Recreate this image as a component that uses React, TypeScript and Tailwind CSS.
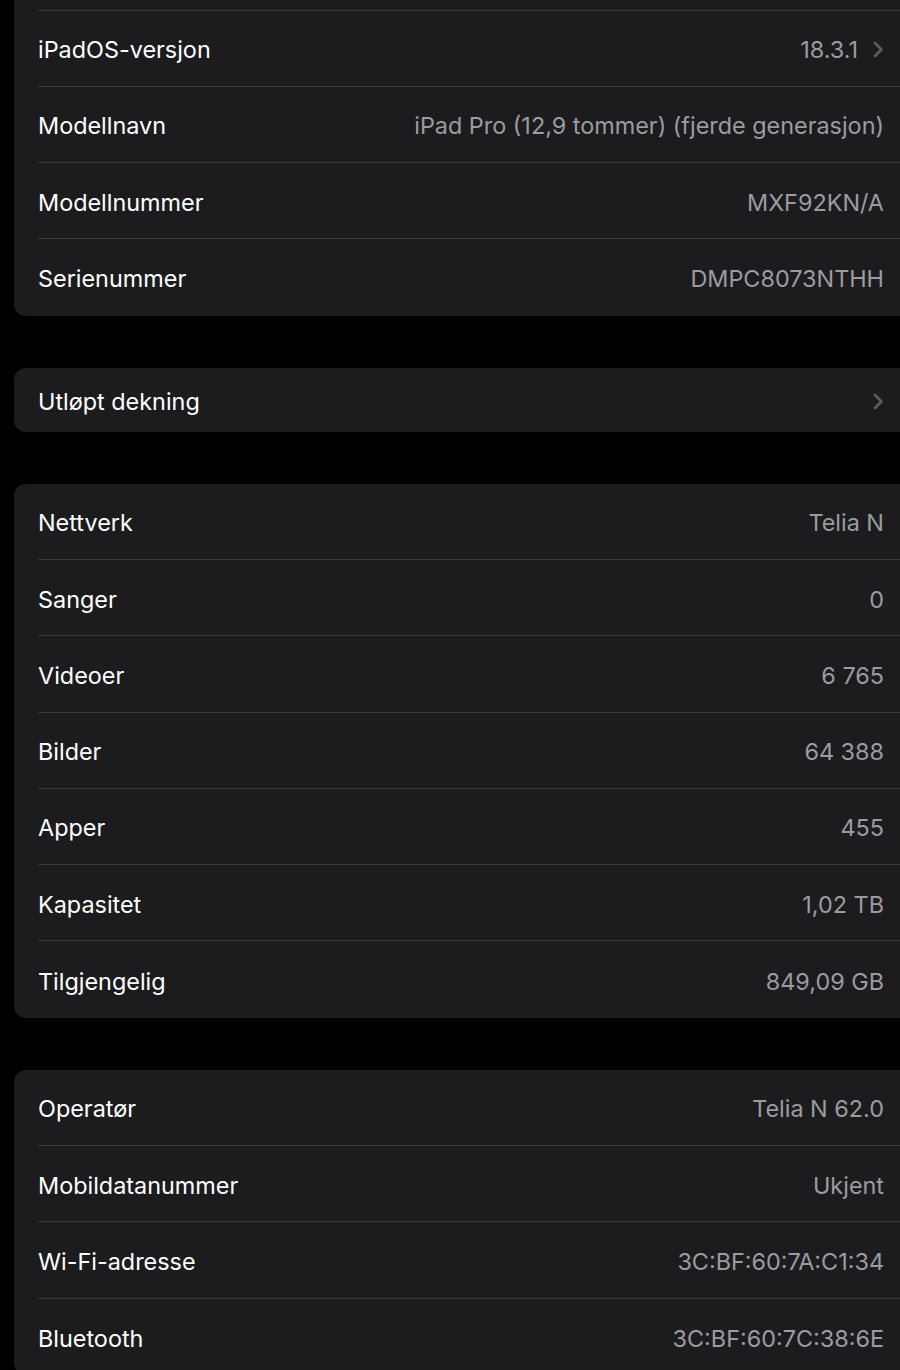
import * as React from 'react'

type Row = {label: string; value?: string; chevron?: boolean}

const deviceRows: Array<Row> = [
  {label: 'iPadOS-versjon', value: '18.3.1', chevron: true},
  {label: 'Modellnavn', value: 'iPad Pro (12,9 tommer) (fjerde generasjon)'},
  {label: 'Modellnummer', value: 'MXF92KN/A'},
  {label: 'Serienummer', value: 'DMPC8073NTHH'},
]

const mediaRows: Array<Row> = [
  {label: 'Nettverk', value: 'Telia N'},
  {label: 'Sanger', value: '0'},
  {label: 'Videoer', value: '6 765'},
  {label: 'Bilder', value: '64 388'},
  {label: 'Apper', value: '455'},
  {label: 'Kapasitet', value: '1,02 TB'},
  {label: 'Tilgjengelig', value: '849,09 GB'},
]

const networkRows: Array<Row> = [
  {label: 'Operatør', value: 'Telia N 62.0'},
  {label: 'Mobildatanummer', value: 'Ukjent'},
  {label: 'Wi-Fi-adresse', value: '3C:BF:60:7A:C1:34'},
  {label: 'Bluetooth', value: '3C:BF:60:7C:38:6E'},
]

function Chevron() {
  return (
    <svg width="11" height="17" viewBox="0 0 11 17" className="ml-[15px] shrink-0">
      <path
        d="M2 2 L8.5 8.5 L2 15"
        fill="none"
        stroke="#5c5c61"
        strokeWidth="2.6"
        strokeLinecap="round"
        strokeLinejoin="round"
      />
    </svg>
  )
}

function SettingRow({row, last, height}: {row: Row; last: boolean; height: string}) {
  return (
    <div className={`flex items-center pl-[24px] ${height}`}>
      <div
        className={`flex h-full flex-1 items-center justify-between pt-[3px] pr-[16px] ${
          last ? '' : 'border-b border-[#38383a]'
        }`}
      >
        <span className="text-white">{row.label}</span>
        <span className="flex items-center text-[#9b9ba0]">
          {row.value}
          {row.chevron && <Chevron />}
        </span>
      </div>
    </div>
  )
}

function Card({
  rows,
  height = 'h-[76.3px]',
  cutTop = false,
}: {
  rows: Array<Row>
  height?: string
  cutTop?: boolean
}) {
  return (
    <div
      className={`ml-[14px] overflow-hidden bg-[#1c1c1e] ${
        cutTop ? 'rounded-bl-[12px]' : 'rounded-l-[12px]'
      }`}
    >
      {cutTop && (
        <div className="pl-[24px]">
          <div className="h-[10.5px] border-b border-[#38383a]" />
        </div>
      )}
      {rows.map((row, i) => (
        <SettingRow
          key={row.label}
          row={row}
          height={height}
          last={i === rows.length - 1}
        />
      ))}
    </div>
  )
}

export default function App() {
  return (
    <div
      className="h-[1370px] overflow-hidden bg-black text-[23.4px]"
      style={{fontFamily: 'Inter, "Noto Sans", sans-serif'}}
    >
      <div className="flex flex-col gap-[52px]">
        <Card rows={deviceRows} cutTop />
        <Card rows={[{label: 'Utløpt dekning', chevron: true}]} height="h-[64px]" />
        <Card rows={mediaRows} />
        <Card rows={networkRows} />
      </div>
    </div>
  )
}
